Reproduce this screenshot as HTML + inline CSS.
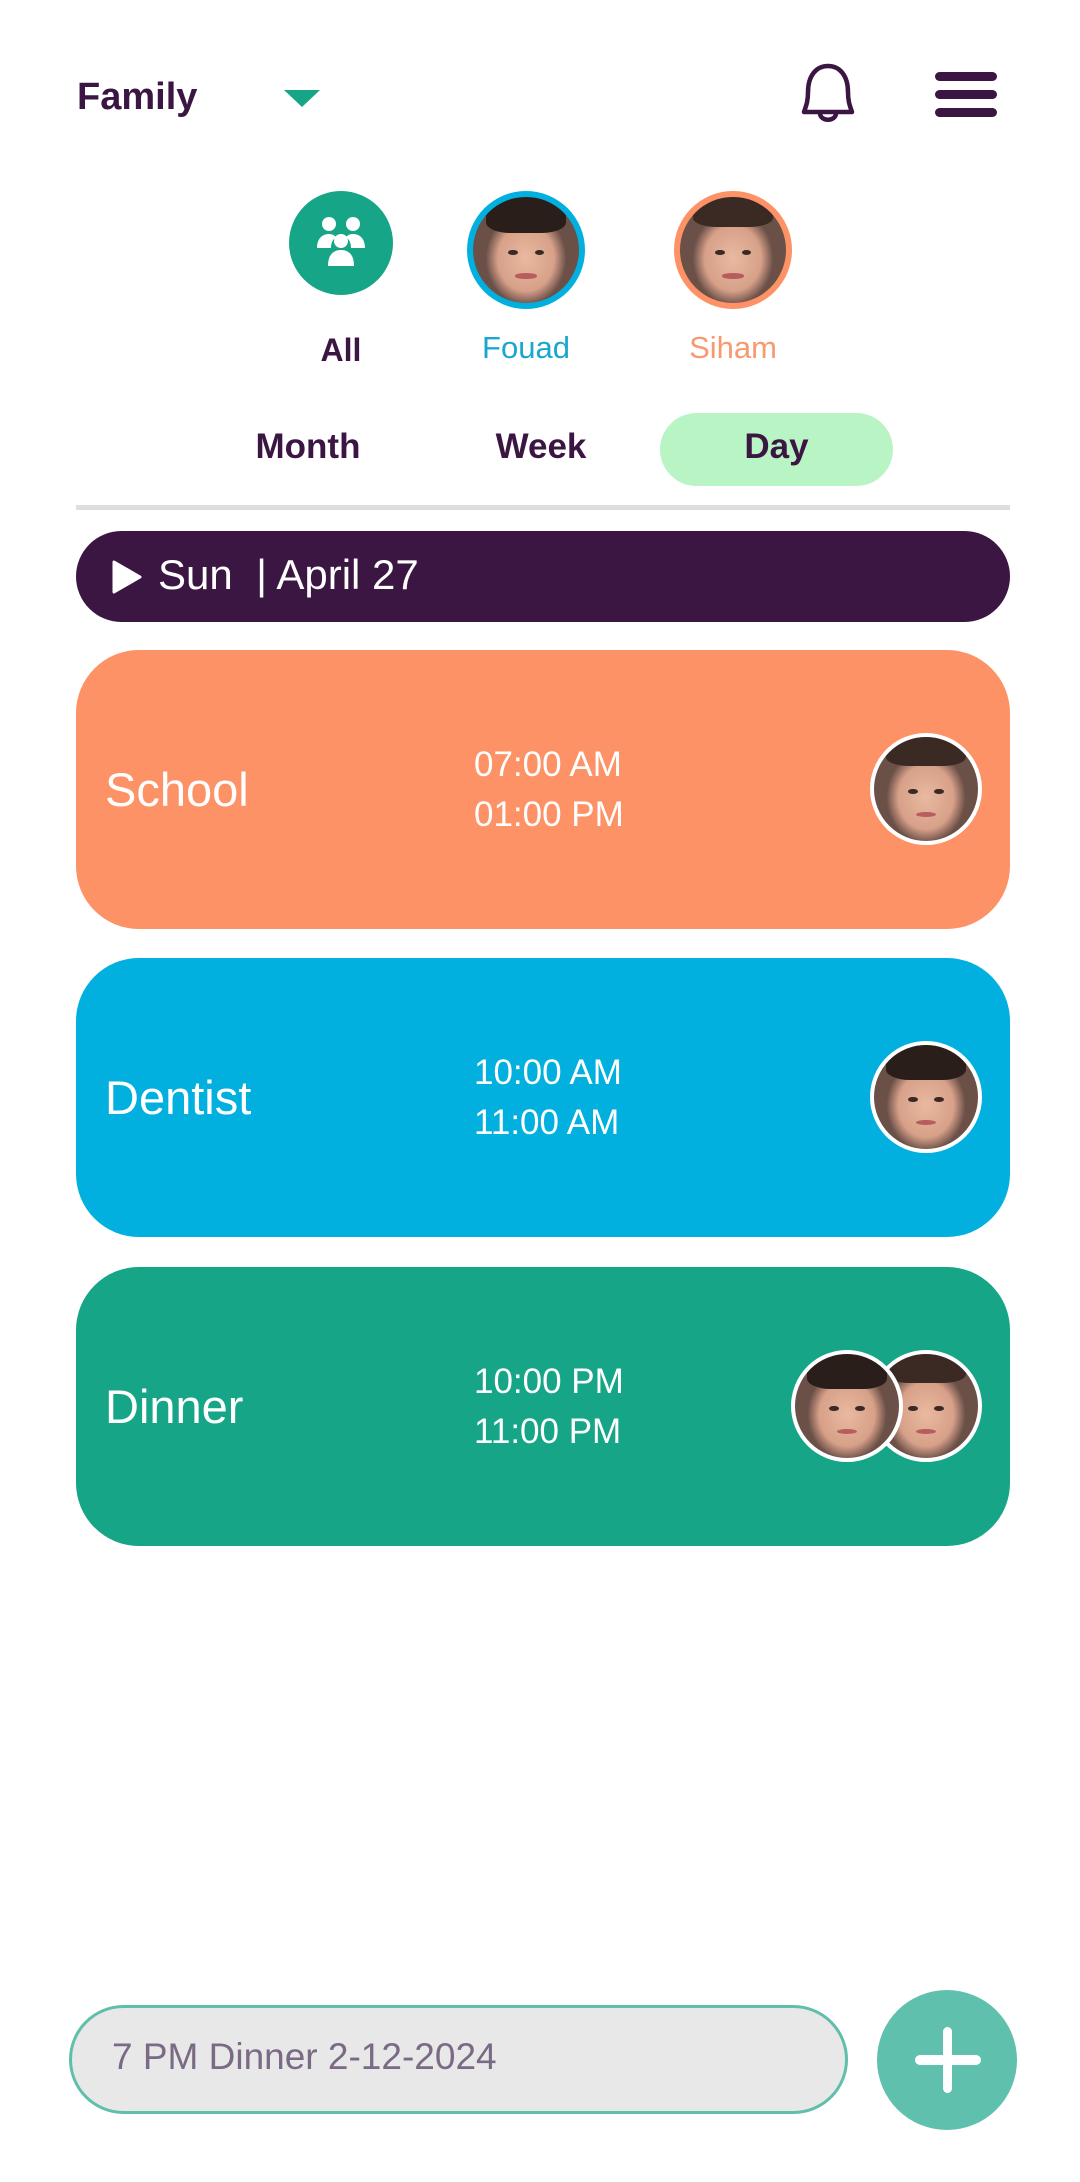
<!DOCTYPE html>
<html><head><meta charset="utf-8"><style>
*{margin:0;padding:0;box-sizing:border-box}
body{width:1080px;height:2182px;background:#fff;position:relative;font-family:"Liberation Sans",sans-serif;overflow:hidden;color:#3b1642}
.a{position:absolute}
.face{position:absolute;border-radius:50%;overflow:hidden;background:radial-gradient(ellipse 38% 44% at 50% 58%,#e9b9a0 0,#d7a089 70%,#6b5048 100%)}
.face:before{content:"";position:absolute;left:12%;top:0;width:76%;height:34%;border-radius:50% 50% 30% 30%;background:#2a1e1a}
.face.g:before{background:#3b2a24;height:28%}
.face .e1,.face .e2{position:absolute;top:50%;width:9%;height:5%;background:#3a2a25;border-radius:50%}
.face .e1{left:33%}.face .e2{right:33%}
.face .m{position:absolute;left:40%;top:72%;width:20%;height:5%;background:#b85d5d;border-radius:50%}
.card{position:absolute;left:76px;width:934px;height:279px;border-radius:63px;color:#fff}
.card .t{position:absolute;left:29px;top:112px;font-size:47px;line-height:56px}
.card .tm{position:absolute;left:398px;width:120px;text-align:center;font-size:35px;line-height:50px;top:90px;white-space:nowrap}
.card .av{border:4px solid #fff;width:112px;height:112px;top:83px}
</style></head><body>
<div class="a" style="left:77px;top:76px;font-size:38px;font-weight:bold;">Family</div>
<svg class="a" style="left:284px;top:90px" width="36" height="18"><polygon points="0,0 36,0 18,17" fill="#16a587"/></svg>
<svg class="a" style="left:796px;top:62px" width="64" height="66" viewBox="0 0 64 66"><path d="M8 50 C10 44 12 40 12 30 C12 14 20 4 32 4 C44 4 52 14 52 30 C52 40 54 44 56 50 Z" fill="none" stroke="#3b1642" stroke-width="4.5" stroke-linejoin="round"/><path d="M24 51 C24 60 40 60 40 51" fill="none" stroke="#3b1642" stroke-width="4.5"/></svg>
<div class="a" style="left:935px;top:72px;width:62px;height:9px;background:#3b1642;border-radius:5px"></div>
<div class="a" style="left:935px;top:90px;width:62px;height:9px;background:#3b1642;border-radius:5px"></div>
<div class="a" style="left:935px;top:108px;width:62px;height:9px;background:#3b1642;border-radius:5px"></div>

<div class="a" style="left:289px;top:191px;width:104px;height:104px;border-radius:50%;background:#16a587"></div>
<svg class="a" style="left:311px;top:214px" width="60" height="60" viewBox="0 0 60 60" fill="#fff"><circle cx="18" cy="10" r="7"/><circle cx="42" cy="10" r="7"/><path d="M6 34c0-10 6-14 12-14 4 0 6 2 7 3-4 3-5 7-5 11z"/><path d="M54 34c0-10-6-14-12-14-4 0-6 2-7 3 4 3 5 7 5 11z"/><circle cx="30" cy="27" r="7"/><path d="M17 52c0-12 6-16 13-16s13 4 13 16z"/></svg>
<div class="a" style="left:467px;top:191px;width:118px;height:118px;border-radius:50%;background:#02b0df"></div>
<div class="face" style="left:473px;top:197px;width:106px;height:106px"><i class="e1"></i><i class="e2"></i><i class="m"></i></div>
<div class="a" style="left:674px;top:191px;width:118px;height:118px;border-radius:50%;background:#fd9266"></div>
<div class="face g" style="left:680px;top:197px;width:106px;height:106px"><i class="e1"></i><i class="e2"></i><i class="m"></i></div>
<div class="a" style="left:291px;top:332px;width:100px;text-align:center;font-size:32px;font-weight:bold">All</div>
<div class="a" style="left:456px;top:330px;width:140px;text-align:center;font-size:31px;color:#1aa7cf">Fouad</div>
<div class="a" style="left:663px;top:330px;width:140px;text-align:center;font-size:31px;color:#f79a70">Siham</div>

<div class="a" style="left:660px;top:413px;width:233px;height:73px;border-radius:37px;background:#b9f4c4"></div>
<div class="a" style="left:228px;top:427px;width:160px;text-align:center;font-size:35px;font-weight:bold">Month</div>
<div class="a" style="left:461px;top:427px;width:160px;text-align:center;font-size:35px;font-weight:bold">Week</div>
<div class="a" style="left:660px;top:427px;width:233px;text-align:center;font-size:35px;font-weight:bold">Day</div>
<div class="a" style="left:76px;top:505px;width:934px;height:5px;background:#dedede"></div>

<div class="a" style="left:76px;top:531px;width:934px;height:91px;border-radius:46px;background:#3b1642"></div>
<svg class="a" style="left:112px;top:560px" width="30" height="34"><polygon points="2,2 28,17 2,32" fill="#fff" stroke="#fff" stroke-width="3" stroke-linejoin="round"/></svg>
<div class="a" style="left:158px;top:551px;font-size:42px;color:#fff;white-space:pre">Sun  | April 27</div>

<div class="card" style="top:650px;background:#fd9266"><div class="t">School</div><div class="tm">07:00 AM<br>01:00 PM</div><div class="face g av" style="left:794px"><i class="e1"></i><i class="e2"></i><i class="m"></i></div></div>
<div class="card" style="top:958px;background:#02b0df"><div class="t">Dentist</div><div class="tm">10:00 AM<br>11:00 AM</div><div class="face av" style="left:794px"><i class="e1"></i><i class="e2"></i><i class="m"></i></div></div>
<div class="card" style="top:1267px;background:#16a587"><div class="t">Dinner</div><div class="tm">10:00 PM<br>11:00 PM</div><div class="face g av" style="left:794px"><i class="e1"></i><i class="e2"></i><i class="m"></i></div><div class="face av" style="left:715px"><i class="e1"></i><i class="e2"></i><i class="m"></i></div></div>

<div class="a" style="left:69px;top:2005px;width:779px;height:109px;border-radius:55px;background:#e8e8e8;border:3px solid #5fbfaa"></div>
<div class="a" style="left:112px;top:2036px;font-size:37px;color:#7a6a85">7 PM Dinner 2-12-2024</div>
<div class="a" style="left:877px;top:1990px;width:140px;height:140px;border-radius:50%;background:#5fc0ad"></div>
<div class="a" style="left:943px;top:2027px;width:9px;height:66px;border-radius:5px;background:#fff"></div>
<div class="a" style="left:915px;top:2055px;width:66px;height:10px;border-radius:5px;background:#fff"></div>
</body></html>
